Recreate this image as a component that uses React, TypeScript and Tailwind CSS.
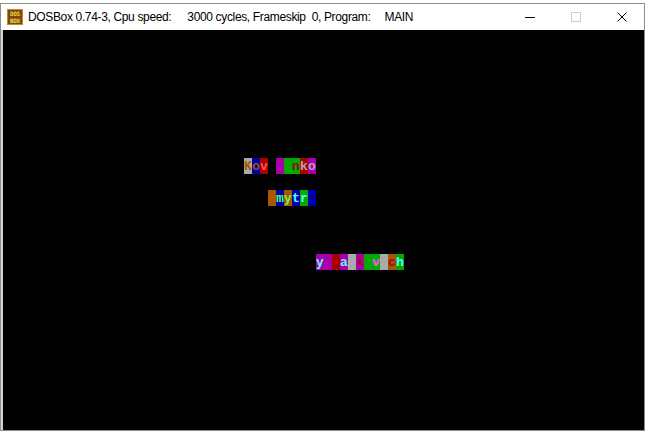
import React from "react";

// VGA text-mode palette, written out as full class names
const BG: Record<number, string> = {
  0: "bg-[#000000]",
  1: "bg-[#0000aa]",
  2: "bg-[#00aa00]",
  3: "bg-[#00aaaa]",
  4: "bg-[#aa0000]",
  5: "bg-[#aa00aa]",
  6: "bg-[#aa5500]",
  7: "bg-[#aaaaaa]",
};

const FG: Record<number, string> = {
  0: "text-[#000000]",
  4: "text-[#aa0000]",
  6: "text-[#aa5500]",
  7: "text-[#aaaaaa]",
  10: "text-[#55ff55]",
  11: "text-[#55ffff]",
  12: "text-[#ff5555]",
  13: "text-[#ff55ff]",
};

type Cell = [number, number, string];

// row, first column, cells [bg, fg, char]
const lines: { row: number; col: number; cells: (Cell | null)[] }[] = [
  {
    row: 8,
    col: 30,
    cells: [
      [7, 6, "K"],
      [1, 6, "o"],
      [4, 12, "v"],
      null,
      [5, 0, " "],
      [2, 0, " "],
      [2, 4, "n"],
      [4, 7, "k"],
      [5, 7, "o"],
    ],
  },
  {
    row: 10,
    col: 33,
    cells: [
      [6, 0, " "],
      [1, 10, "m"],
      [6, 10, "y"],
      [1, 11, "t"],
      [2, 11, "r"],
      [1, 0, " "],
    ],
  },
  {
    row: 14,
    col: 39,
    cells: [
      [5, 11, "y"],
      [5, 0, " "],
      [4, 0, " "],
      [5, 11, "a"],
      [7, 0, " "],
      [5, 4, "l"],
      [2, 0, " "],
      [2, 13, "v"],
      [7, 0, " "],
      [6, 4, "c"],
      [2, 11, "h"],
    ],
  },
];

function buildScreen(): (Cell | null)[][] {
  const screen: (Cell | null)[][] = Array.from({ length: 25 }, () =>
    Array.from({ length: 80 }, () => null as Cell | null)
  );
  lines.forEach((l) => {
    l.cells.forEach((c, i) => {
      screen[l.row][l.col + i] = c;
    });
  });
  return screen;
}

function DosIcon() {
  return (
    <svg width="16" height="16" viewBox="0 0 16 16">
      <rect x="0.5" y="0.5" width="15" height="15" fill="#7a4a06" stroke="#c08a2a" />
      <text x="8" y="7" fontSize="6" fontWeight="bold" fill="#f6d35a" textAnchor="middle" fontFamily="'DejaVu Sans Mono', monospace">
        DOS
      </text>
      <text x="8" y="14" fontSize="6" fontWeight="bold" fill="#f6d35a" textAnchor="middle" fontFamily="'DejaVu Sans Mono', monospace">
        BOX
      </text>
    </svg>
  );
}

export default function App() {
  const screen = buildScreen();

  return (
    <div className="w-[647px] h-[433px] bg-white pt-[3px] overflow-hidden">
      {/* DOSBox window */}
      <div className="w-[645px] border border-[#8e8e8e] flex flex-col">
        {/* title bar */}
        <div className="h-[26px] bg-white flex items-center font-['Liberation_Sans',sans-serif] text-[12px] tracking-[-0.35px] text-black">
          <div className="ml-[6px] flex">
            <DosIcon />
          </div>
          <span className="ml-[5px] whitespace-pre">DOSBox 0.74-3, Cpu speed:</span>
          <span className="ml-[16px] whitespace-pre">3000 cycles, Frameskip  0, Program:</span>
          <span className="ml-[14px]">MAIN</span>
          <div className="ml-auto flex h-full">
            <div className="w-[46px] h-full flex items-center justify-center">
              <div className="w-[10px] h-px bg-black" />
            </div>
            <div className="w-[46px] h-full flex items-center justify-center">
              <div className="w-[10px] h-[10px] border border-[#cccccc]" />
            </div>
            <div className="w-[45px] h-full flex items-center justify-center">
              <svg width="10" height="10" viewBox="0 0 10 10">
                <path d="M0.5 0.5 L9.5 9.5 M9.5 0.5 L0.5 9.5" stroke="#000" strokeWidth="1" />
              </svg>
            </div>
          </div>
        </div>

        {/* client area */}
        <div className="flex bg-black border-l-2 border-[#d4d4d4]">
          <div className="pl-px flex flex-col font-['Liberation_Mono',monospace] text-[13px] font-bold leading-none">
            {screen.map((row, r) => (
              <div key={r} className="flex h-4">
                {row.map((c, i) =>
                  c ? (
                    <span key={i} className={`w-2 h-4 flex items-center justify-center ${BG[c[0]]} ${FG[c[1]]}`}>
                      {c[2] === " " ? "" : c[2]}
                    </span>
                  ) : (
                    <span key={i} className="w-2 h-4" />
                  )
                )}
              </div>
            ))}
          </div>
        </div>
      </div>
    </div>
  );
}
